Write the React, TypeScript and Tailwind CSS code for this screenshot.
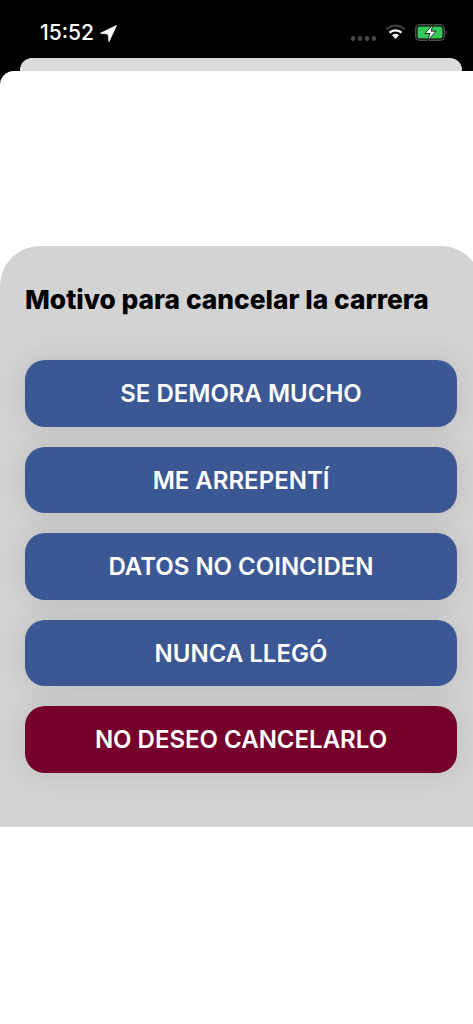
import React from 'react'

const reasons = ['SE DEMORA MUCHO', 'ME ARREPENTÍ', 'DATOS NO COINCIDEN', 'NUNCA LLEGÓ']

function ReasonButton({ label, danger }: { label: string; danger?: boolean }) {
  return (
    <button
      className={`h-[66.5px] w-full rounded-[20px] pt-[2px] text-[24px] font-semibold text-white shadow-[0_0_30px_rgba(0,0,0,0.11)] ${
        danger ? 'bg-[#75002c]' : 'bg-[#3b5895]'
      }`}
    >
      {label}
    </button>
  )
}

export default function App() {
  return (
    <div className="flex h-[1024px] w-[473px] flex-col overflow-hidden bg-black font-['Inter',sans-serif]">
      {/* Status bar */}
      <div className="flex h-[58px] items-start justify-between pl-[40px] pr-[25px] pt-[22px]">
        <div className="flex items-center gap-[6px] text-white">
          <span className="text-[21px] leading-[22px] font-medium">15:52</span>
          <svg width="17" height="17" viewBox="0 0 17 17" fill="#fff">
            <path d="M16.5 0.5 L0.5 8.2 L8 9 L9 16.5 Z" stroke="#fff" strokeWidth="0.8" strokeLinejoin="round" />
          </svg>
        </div>
        <div className="flex items-start pt-[2px]">
          <div className="mr-[9px] mt-[12px] flex gap-[3px]">
            <span className="h-[4.5px] w-[4px] rounded-full bg-[#4a4a4a]" />
            <span className="h-[4.5px] w-[4px] rounded-full bg-[#4a4a4a]" />
            <span className="h-[4.5px] w-[4px] rounded-full bg-[#4a4a4a]" />
            <span className="h-[4.5px] w-[4px] rounded-full bg-[#4a4a4a]" />
          </div>
          <svg width="21" height="16" viewBox="0 0 21 16" fill="none" className="mr-[9px]">
            <path d="M1.2 5.5 A13 13 0 0 1 19.8 5.5" stroke="#3a3a3a" strokeWidth="2.2" />
            <path d="M4.5 8.6 A9 9 0 0 1 16.5 8.6" stroke="#fff" strokeWidth="2.2" />
            <path d="M10.5 15 L7 11.3 A5 5 0 0 1 14 11.3 Z" fill="#fff" />
          </svg>
          <svg width="33" height="17" viewBox="0 0 33 17" fill="none">
            <rect x="0.75" y="0.75" width="28.5" height="15.5" rx="4" stroke="#4d4d4d" strokeWidth="1.5" />
            <rect x="2.5" y="2.5" width="25" height="12" rx="2.5" fill="#34c759" />
            <path d="M30.7 6 C32 6.4 32 10.6 30.7 11 Z" fill="#4d4d4d" />
            <path d="M18.5 0 L10 9.5 H15 L12.5 17 L21 7.2 H16 Z" fill="#fff" stroke="#000" strokeWidth="0.8" />
          </svg>
        </div>
      </div>

      {/* Sheet behind */}
      <div className="ml-[20px] mr-[11px] h-[13px] shrink-0 rounded-t-[12px] bg-[#dcdcdc]" />

      {/* Front sheet */}
      <div className="flex-1 overflow-hidden rounded-tl-[14px] bg-white pt-[175px]">
        <div className="-mr-[8px] h-[581px] rounded-t-[40px] bg-[#d3d3d3] pl-[25px] pr-[24px] pt-[36px]">
          <h2 className="text-[26.35px] leading-[34px] font-extrabold whitespace-nowrap text-black">
            Motivo para cancelar la carrera
          </h2>
          <div className="mt-[44px] flex flex-col gap-[20px]">
            {reasons.map((r) => (
              <ReasonButton key={r} label={r} />
            ))}
            <ReasonButton label="NO DESEO CANCELARLO" danger />
          </div>
        </div>
      </div>
    </div>
  )
}
